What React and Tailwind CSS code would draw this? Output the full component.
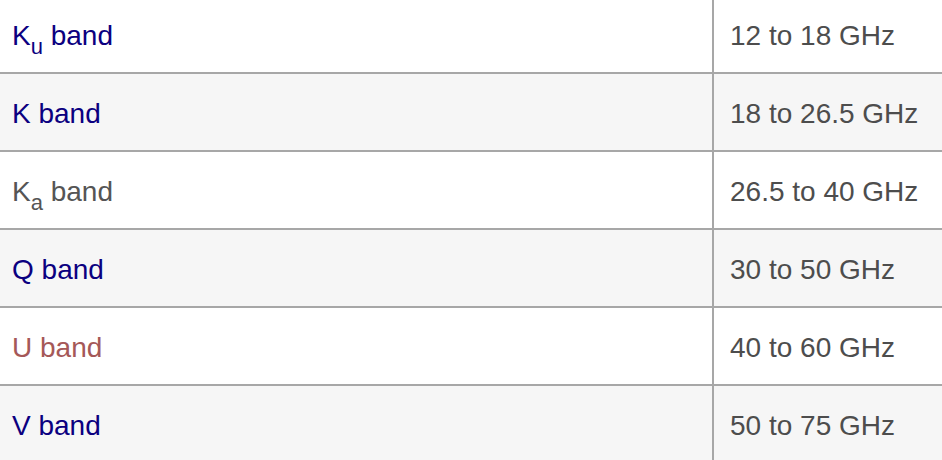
import React from 'react';

const rows = [
    { name: <>K<sub className="text-[22px] align-[-0.2em] leading-none">u</sub> band</>, color: 'text-[#0b0080]', range: '12 to 18 GHz', bg: 'bg-white' },
    { name: 'K band', color: 'text-[#0b0080]', range: '18 to 26.5 GHz', bg: 'bg-[#f6f6f6]' },
    { name: <>K<sub className="text-[22px] align-[-0.2em] leading-none">a</sub> band</>, color: 'text-[#555555]', range: '26.5 to 40 GHz', bg: 'bg-white' },
    { name: 'Q band', color: 'text-[#0b0080]', range: '30 to 50 GHz', bg: 'bg-[#f6f6f6]' },
    { name: 'U band', color: 'text-[#a55858]', range: '40 to 60 GHz', bg: 'bg-white' },
    { name: 'V band', color: 'text-[#0b0080]', range: '50 to 75 GHz', bg: 'bg-[#f6f6f6]' },
];

const App = () => {
    return (
        <div className="w-[942px] h-[460px] overflow-hidden bg-white" style={{ fontFamily: '"Liberation Sans", Arial, sans-serif' }}>
            <div className="-mt-[4px]">
                {rows.map((row, i) => (
                    <div key={i} className={`flex h-[78px] border-b-2 border-[#a7a7a7] ${row.bg}`}>
                        <div className={`w-[712px] flex items-center pl-[12px] pt-[3px] text-[28px] ${row.color}`}>
                            <span>{row.name}</span>
                        </div>
                        <div className="w-[2px] bg-[#a7a7a7]" />
                        <div className="flex-1 flex items-center pl-[16px] pt-[3px] text-[28px] text-[#4d4d4d]">
                            {row.range}
                        </div>
                    </div>
                ))}
            </div>
        </div>
    );
};

export default App;
